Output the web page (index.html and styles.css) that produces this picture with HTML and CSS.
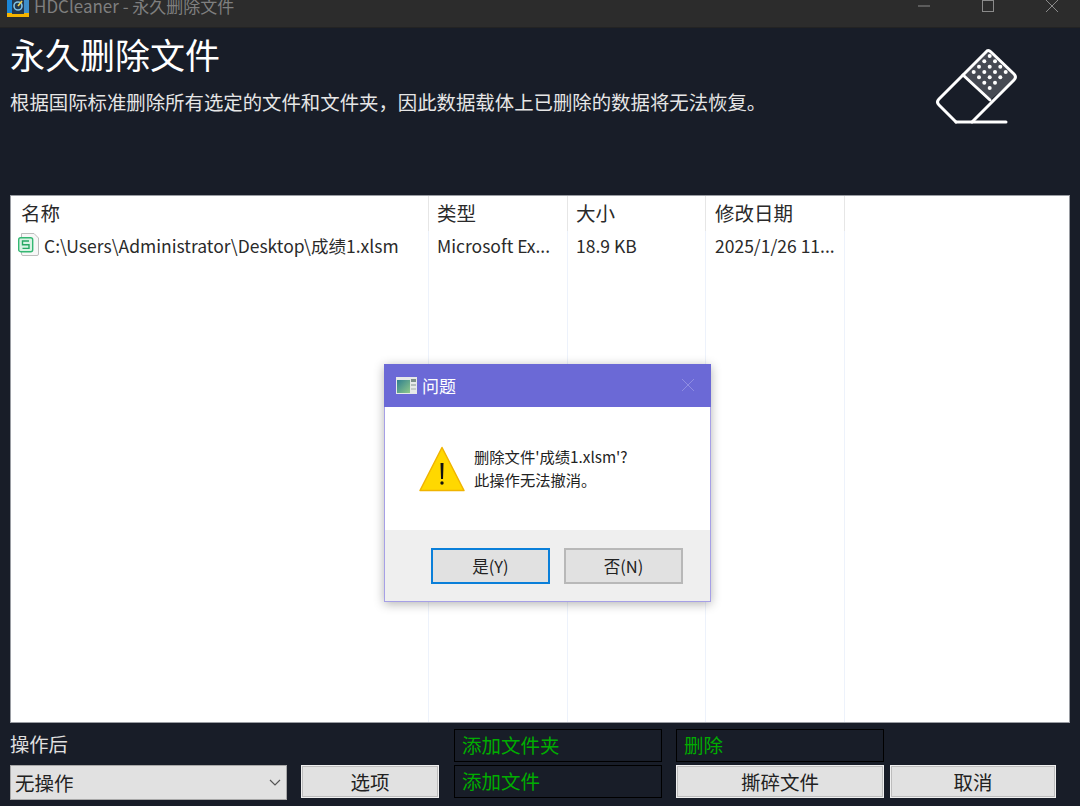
FILE: index.html
```html
<!DOCTYPE html>
<html>

<head>
    <title>HDCleaner</title>
    <link rel="stylesheet" href="styles.css">
</head>

<body>
    <div class="app">
        <div class="titlebar">
            <svg class="app-icon" viewBox="0 0 22 17">
                <rect width="22" height="17" fill="#1b86d6"/>
                <rect x="0" y="13" width="22" height="4" fill="#f5b400"/>
                <rect x="16" y="0" width="6" height="13" fill="#3f8fc9"/>
                <rect x="5" y="0" width="12" height="14" fill="#24384f"/>
                <circle cx="11" cy="6" r="4" fill="none" stroke="#7fc4e8" stroke-width="1.600"/>
                <path d="M11 6 L15 1" stroke="#f0cf4a" stroke-width="1.600"/>
            </svg>
            <span class="app-title">HDCleaner - 永久删除文件</span>
            <div class="win-buttons">
                <svg viewBox="0 0 12 12" class="win-btn"><path d="M0 6 H12" /></svg>
                <svg viewBox="0 0 12 12" class="win-btn"><rect x="0.5" y="0.5" width="11" height="11" /></svg>
                <svg viewBox="0 0 12 12" class="win-btn"><path d="M0 0 L12 12 M12 0 L0 12" /></svg>
            </div>
        </div>

        <div class="content">
            <div class="header">
                <div class="header-text">
                    <h1>永久删除文件</h1>
                    <p>根据国际标准删除所有选定的文件和文件夹，因此数据载体上已删除的数据将无法恢复。</p>
                </div>
                <svg class="eraser" viewBox="0 0 84 80">
                    <path d="M28 29 L51 6 Q53 3 56 6 L79 28 Q82 31 79 34 L55 54 Z" fill="#fff" fill-opacity="0.2"/>
                    <g fill="none" stroke="#fff" stroke-width="3" stroke-linecap="round" stroke-linejoin="round">
                        <path d="M21 76 L4 59 Q1 56 4 53 L51 6 Q53 3 56 6 L79 28 Q82 31 79 34 L37 76"/>
                        <path d="M28 29 L55 54"/>
                        <path d="M21 76 H71"/>
                    </g>
                    <g fill="#fff">
                        <circle cx="54.700" cy="10" r="2"/>
                        <circle cx="49.300" cy="15.300" r="2"/><circle cx="60" cy="15.300" r="2"/>
                        <circle cx="44" cy="20.700" r="2"/><circle cx="54.700" cy="20.700" r="2"/><circle cx="65.300" cy="20.700" r="2"/>
                        <circle cx="38.700" cy="26" r="2"/><circle cx="49.300" cy="26" r="2"/><circle cx="60" cy="26" r="2"/><circle cx="70.700" cy="26" r="2"/>
                        <circle cx="44" cy="31.300" r="2"/><circle cx="54.700" cy="31.300" r="2"/><circle cx="65.300" cy="31.300" r="2"/>
                        <circle cx="49.300" cy="36.700" r="2"/><circle cx="60" cy="36.700" r="2"/>
                        <circle cx="54.700" cy="42" r="2"/>
                    </g>
                </svg>
            </div>

            <div class="list">
                <div class="col col-name">
                    <div class="col-head">名称</div>
                    <div class="cell cell-file">
                        <svg class="file-icon" viewBox="0 0 22 23">
                            <path d="M3.500 0.500 H16 L20.500 5 V21 Q20.500 22.500 19 22.500 H5 Q3.500 22.500 3.500 21 Z" fill="#f7f7f7" stroke="#bdbdbd"/>
                            <rect x="0.700" y="4.700" width="14" height="14" rx="2" fill="#d9f3e4" stroke="#35b873" stroke-width="1.400"/>
                            <path d="M11 8 H4.500 V11.700 H11 V15.400 H4.500" fill="none" stroke="#25a862" stroke-width="1.400"/>
                        </svg>
                        <span>C:\Users\Administrator\Desktop\成绩1.xlsm</span>
                    </div>
                </div>
                <div class="col col-type">
                    <div class="col-head">类型</div>
                    <div class="cell">Microsoft Ex...</div>
                </div>
                <div class="col col-size">
                    <div class="col-head">大小</div>
                    <div class="cell">18.9 KB</div>
                </div>
                <div class="col col-date">
                    <div class="col-head">修改日期</div>
                    <div class="cell">2025/1/26 11...</div>
                </div>
            </div>

            <div class="footer">
                <div class="after-group">
                    <div class="after-label">操作后</div>
                    <div class="after-controls">
                        <div class="select">
                            <span>无操作</span>
                            <svg viewBox="0 0 12 7" class="chevron"><path d="M1 1 L6 6 L11 1" /></svg>
                        </div>
                        <div class="btn btn-options">选项</div>
                    </div>
                </div>
                <div class="link-col">
                    <div class="link">添加文件夹</div>
                    <div class="link">添加文件</div>
                </div>
                <div class="action-col">
                    <div class="link link-delete">删除</div>
                    <div class="action-row">
                        <div class="btn btn-shred">撕碎文件</div>
                        <div class="btn btn-cancel">取消</div>
                    </div>
                </div>
            </div>
        </div>

        <div class="dialog">
            <div class="dialog-title">
                <svg class="dialog-icon" viewBox="0 0 21 17">
                    <defs>
                        <linearGradient id="dlg-grad" x1="0" y1="0" x2="1" y2="1">
                            <stop offset="0" stop-color="#2f7f8f"/>
                            <stop offset="1" stop-color="#8fc98a"/>
                        </linearGradient>
                    </defs>
                    <rect width="21" height="17" fill="#e6e9e8"/>
                    <rect x="1" y="3" width="13" height="13" fill="url(#dlg-grad)"/>
                    <rect x="15" y="2" width="5" height="3" fill="#7d8f8b"/>
                    <rect x="15" y="7" width="5" height="2" fill="#b4bdbb"/>
                    <rect x="15" y="11" width="5" height="2" fill="#c4cbc9"/>
                </svg>
                <span>问题</span>
                <svg class="dialog-close" viewBox="0 0 12 12"><path d="M0 0 L12 12 M12 0 L0 12" /></svg>
            </div>
            <div class="dialog-body">
                <svg class="warn-icon" viewBox="0 0 46 46">
                    <path d="M23 1.500 L45 44.500 H1 Z" fill="#ffd800" stroke="#f0b400" stroke-width="1.500" stroke-linejoin="round"/>
                    <path d="M21.500 17 H24.500 L24 33 H22 Z" fill="#111"/>
                    <circle cx="23" cy="37" r="1.700" fill="#111"/>
                </svg>
                <div class="dialog-msg">
                    <div>删除文件'成绩1.xlsm'?</div>
                    <div>此操作无法撤消。</div>
                </div>
            </div>
            <div class="dialog-foot">
                <div class="dlg-btn dlg-btn-default">是(Y)</div>
                <div class="dlg-btn">否(N)</div>
            </div>
        </div>
    </div>
</body>

</html>
```
FILE: styles.css
```css
html, body {
    margin: 0;
    padding: 0;
}

.app {
    position: relative;
    width: 1080px;
    height: 806px;
    overflow: hidden;
    display: flex;
    flex-direction: column;
    background-color: #181d28;
    font-family: "Noto Sans CJK SC", "Noto Sans", sans-serif;
}

.titlebar {
    height: 28px;
    flex: none;
    display: flex;
    align-items: flex-start;
    background-color: #2c2c2c;
    border-bottom: 1px solid #232323;
    box-sizing: border-box;
    overflow: hidden;
}

.app-icon {
    width: 22px;
    height: 17px;
    margin-left: 7px;
}

.app-title {
    margin: -6px 0 0 5px;
    font-size: 17px;
    line-height: 24px;
    color: #7f7f7f;
}

.win-buttons {
    margin-left: auto;
    display: flex;
    margin-right: 22px;
    gap: 52px;
}

.win-btn {
    width: 12px;
    height: 12px;
    fill: none;
    stroke: #8a8a8a;
    stroke-width: 1;
}

.content {
    flex: 1;
    display: flex;
    flex-direction: column;
    padding: 0 10px;
}

.header {
    height: 167px;
    flex: none;
    display: flex;
    justify-content: space-between;
}

.header h1 {
    margin: 4px 0 0 0;
    font-size: 35px;
    line-height: 44px;
    font-weight: 400;
    color: #fff;
}

.header p {
    margin: 13px 0 0 0;
    font-size: 19.400px;
    line-height: 26px;
    color: #e6e6e6;
    white-space: nowrap;
}

.eraser {
    width: 84px;
    height: 80px;
    margin: 18px 51px 0 0;
}

.list {
    height: 528px;
    flex: none;
    box-sizing: border-box;
    display: flex;
    background-color: #fff;
    border: 1px solid #9a9da3;
}

.col {
    box-sizing: border-box;
    border-right: 1px solid #edf2fb;
    font-size: 17.500px;
    color: #2a2a2a;
}

.col-name {
    width: 418px;
}

.col-type {
    width: 139px;
}

.col-size {
    width: 138px;
}

.col-date {
    width: 139px;
}

.col-head {
    height: 35px;
    line-height: 34px;
    padding-left: 9px;
    margin-right: -1px;
    border-right: 1px solid #e6e6e6;
    font-size: 19.500px;
}

.col-name .col-head {
    padding-left: 10px;
}

.col-type .col-head,
.col-type .cell,
.col-size .col-head,
.col-size .cell {
    padding-left: 8px;
}

.cell {
    height: 29px;
    line-height: 29px;
    padding-left: 9px;
    white-space: nowrap;
}

.cell-file {
    display: flex;
    align-items: center;
    padding-left: 7px;
    gap: 4px;
}

.file-icon {
    width: 22px;
    height: 23px;
    margin-top: -2px;
}

.footer {
    flex: 1;
    display: flex;
}

.after-group {
    width: 444px;
    flex: none;
}

.after-label {
    height: 42px;
    line-height: 42px;
    font-size: 19.300px;
    color: #e0e0e0;
}

.after-controls {
    display: flex;
    gap: 14px;
}

.select {
    width: 277px;
    height: 35px;
    box-sizing: border-box;
    display: flex;
    align-items: center;
    justify-content: space-between;
    padding: 0 5px 0 4px;
    background-color: #e1e1e1;
    border: 1px solid #a8a8a8;
    font-size: 19.500px;
    color: #222;
}

.chevron {
    width: 12px;
    height: 7px;
    fill: none;
    stroke: #555;
    stroke-width: 1.200;
}

.btn {
    height: 33px;
    box-sizing: border-box;
    display: flex;
    align-items: center;
    justify-content: center;
    background-color: #e1e1e1;
    border: 2px solid #bdbdbd;
    outline: 1px solid #f0f0f0;
    outline-offset: -1px;
    font-size: 19.500px;
    color: #222;
}

.btn-options {
    width: 138px;
}

.btn-shred {
    width: 208px;
}

.btn-cancel {
    width: 166px;
}

.link-col {
    width: 208px;
    flex: none;
    margin-top: 6px;
    display: flex;
    flex-direction: column;
    gap: 3px;
}

.link {
    height: 33px;
    box-sizing: border-box;
    line-height: 29px;
    padding-left: 7px;
    border: 1px solid #000;
    font-size: 19.500px;
    color: #00ad00;
}

.action-col {
    margin-left: 14px;
    margin-top: 6px;
    display: flex;
    flex-direction: column;
    gap: 3px;
}

.link-delete {
    width: 208px;
}

.action-row {
    display: flex;
    gap: 6px;
}

.dialog {
    position: absolute;
    left: 384px;
    top: 364px;
    width: 327px;
    height: 238px;
    box-sizing: border-box;
    display: flex;
    flex-direction: column;
    background-color: #fff;
    border: 1px solid #a6a0e6;
    border-top: none;
    box-shadow: 0 2px 10px rgba(0, 0, 0, 0.3);
}

.dialog-title {
    height: 43px;
    flex: none;
    display: flex;
    align-items: center;
    box-sizing: border-box;
    margin: 0 -1px;
    padding: 0 0 1px 12px;
    background-color: #6b69d6;
    font-size: 17px;
    color: #fff;
}

.dialog-icon {
    width: 21px;
    height: 17px;
    margin-right: 5px;
}

.dialog-close {
    width: 12px;
    height: 12px;
    margin-left: auto;
    margin-right: 17px;
    fill: none;
    stroke: #8f8de2;
    stroke-width: 1;
}

.dialog-body {
    flex: 1;
    display: flex;
    align-items: center;
    padding-left: 34px;
}

.warn-icon {
    width: 46px;
    height: 46px;
    margin-top: 1px;
}

.dialog-msg {
    margin-left: 9px;
    margin-top: -1px;
    font-size: 15.300px;
    line-height: 23px;
    color: #222;
}

.dialog-foot {
    height: 71px;
    flex: none;
    display: flex;
    justify-content: flex-end;
    gap: 14px;
    padding: 18px 27px 0 0;
    box-sizing: border-box;
    background-color: #efefef;
}

.dlg-btn {
    width: 119px;
    height: 36px;
    box-sizing: border-box;
    display: flex;
    align-items: center;
    justify-content: center;
    background-color: #e1e1e1;
    border: 2px solid #b8b8b8;
    font-size: 16.500px;
    color: #222;
}

.dlg-btn-default {
    border-color: #0a7fd9;
}
```
